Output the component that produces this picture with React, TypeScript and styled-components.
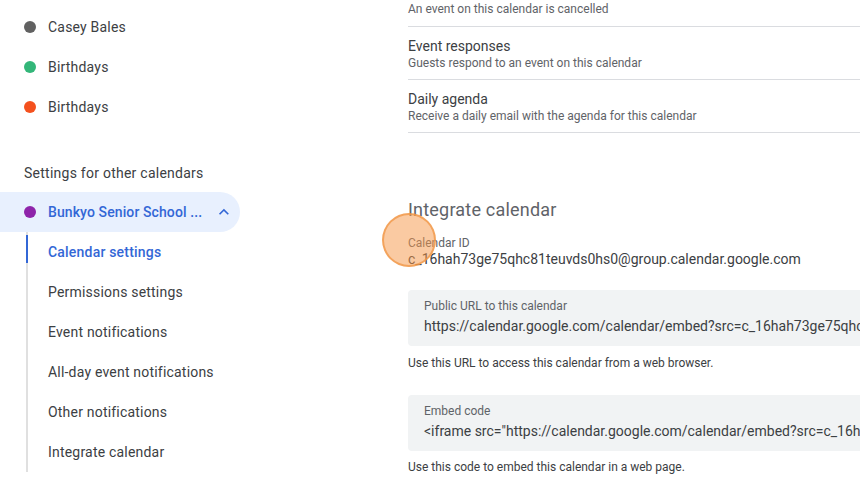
import React from "react";
import styled, { createGlobalStyle } from "styled-components";

const Global = createGlobalStyle`
  html, body { margin: 0; padding: 0; background: #fff; }
  body { width: 860px; height: 482px; overflow: hidden; font-family: Roboto, "Liberation Sans", Arial, sans-serif; }
`;

const Page = styled.div`
  display: flex;
  width: 860px;
  height: 482px;
  overflow: hidden;
  position: relative;
`;

const Sidebar = styled.nav`
  width: 256px;
  flex: none;
  padding-top: 7px;
  display: flex;
  flex-direction: column;
`;

const CalRow = styled.div`
  display: flex;
  align-items: center;
  height: 40px;
  padding-left: 24px;
  gap: 12px;
  font-size: 14px;
  letter-spacing: 0.2px;
  color: #3c4043;
`;

const Dot = styled.span<{ $c: string }>`
  width: 12px;
  height: 12px;
  border-radius: 50%;
  background: ${(p) => p.$c};
  flex: none;
`;

const SectionTitle = styled.div`
  margin: 36px 0 9px 24px;
  line-height: 20px;
  font-size: 14px;
  letter-spacing: 0.25px;
  color: #3c4043;
`;

const SelectedCal = styled.div`
  display: flex;
  align-items: center;
  height: 40px;
  width: 240px;
  box-sizing: border-box;
  padding-left: 24px;
  padding-right: 6px;
  gap: 12px;
  background: #e8f0fe;
  border-radius: 0 20px 20px 0;
  color: #3367d6;
  font-size: 14px;
  letter-spacing: 0.1px;
  font-weight: 500;
`;

const SelName = styled.span`
  flex: 1;
  white-space: nowrap;
`;

const SubList = styled.div`
  margin-left: 26px;
  border-left: 2px solid #e0e0e0;
  display: flex;
  flex-direction: column;
`;

const SubItem = styled.div<{ $active?: boolean }>`
  position: relative;
  height: 40px;
  display: flex;
  align-items: center;
  padding-left: 20px;
  font-size: 14px;
  letter-spacing: 0.2px;
  color: ${(p) => (p.$active ? "#3367d6" : "#3c4043")};
  font-weight: ${(p) => (p.$active ? 500 : 400)};
  &::before {
    content: "";
    display: ${(p) => (p.$active ? "block" : "none")};
    position: absolute;
    left: -2px;
    top: 3px;
    width: 2px;
    height: 28px;
    background: #3367d6;
  }
`;

const Main = styled.main`
  flex: 1;
  padding-left: 152px;
  padding-top: 1px;
  display: flex;
  flex-direction: column;
  min-width: 0;
`;

const NotifRow = styled.div<{ $first?: boolean }>`
  border-bottom: 1px solid #dadce0;
  padding: ${(p) => (p.$first ? "0 0 9px" : "10px 0 8px")};
  display: flex;
  flex-direction: column;
`;

const NotifTitle = styled.div`
  font-size: 14px;
  line-height: 18px;
  color: #3c4043;
`;

const NotifSub = styled.div`
  font-size: 12px;
  line-height: 16px;
  color: #5f6368;
`;

const Heading = styled.h2`
  margin: 65px 0 13px;
  font-size: 18px;
  line-height: 24px;
  font-weight: 400;
  color: #5f6368;
  letter-spacing: 0.2px;
`;

const FieldLabel = styled.div`
  font-size: 12px;
  line-height: 16px;
  color: #5f6368;
`;

const FieldValue = styled.div`
  font-size: 14px;
  line-height: 16px;
  color: #3c4043;
  white-space: nowrap;
`;

const CodeBox = styled.div<{ $top: number }>`
  margin-top: ${(p) => p.$top}px;
  width: 620px;
  height: 56px;
  box-sizing: border-box;
  padding: 8px 16px 0;
  background: #f1f3f4;
  border-radius: 4px;
  display: flex;
  flex-direction: column;
  overflow: hidden;
`;

const BoxValue = styled.div`
  font-size: 14px;
  line-height: 20px;
  color: #3c4043;
  white-space: nowrap;
  margin-top: 2px;
`;

const Help = styled.div`
  margin-top: 9px;
  font-size: 12px;
  line-height: 16px;
  color: #3c4043;
`;

const Help2 = styled(Help)`
  margin-top: 8px;
`;

const ClickMarker = styled.div`
  position: absolute;
  left: 382px;
  top: 213px;
  width: 54px;
  height: 54px;
  box-sizing: border-box;
  border-radius: 50%;
  background: rgba(245, 150, 70, 0.5);
  border: 2px solid rgba(240, 150, 70, 0.75);
  pointer-events: none;
`;

const Chevron = () => (
  <svg width="24" height="24" viewBox="0 0 24 24" fill="#3367d6">
    <path d="M12 8l-6 6 1.41 1.41L12 10.83l4.59 4.58L18 14z" />
  </svg>
);

export default function App() {
  const subs = [
    "Calendar settings",
    "Permissions settings",
    "Event notifications",
    "All-day event notifications",
    "Other notifications",
    "Integrate calendar",
  ];
  return (
    <Page>
      <Global />
      <Sidebar>
        <CalRow><Dot $c="#616161" />Casey Bales</CalRow>
        <CalRow><Dot $c="#33b679" />Birthdays</CalRow>
        <CalRow><Dot $c="#f4511e" />Birthdays</CalRow>
        <SectionTitle>Settings for other calendars</SectionTitle>
        <SelectedCal>
          <Dot $c="#8e24aa" />
          <SelName>Bunkyo Senior School ...</SelName>
          <Chevron />
        </SelectedCal>
        <SubList>
          {subs.map((s, i) => (
            <SubItem key={s} $active={i === 0}>{s}</SubItem>
          ))}
        </SubList>
      </Sidebar>
      <Main>
        <NotifRow $first>
          <NotifSub>An event on this calendar is cancelled</NotifSub>
        </NotifRow>
        <NotifRow>
          <NotifTitle>Event responses</NotifTitle>
          <NotifSub>Guests respond to an event on this calendar</NotifSub>
        </NotifRow>
        <NotifRow>
          <NotifTitle>Daily agenda</NotifTitle>
          <NotifSub>Receive a daily email with the agenda for this calendar</NotifSub>
        </NotifRow>
        <Heading>Integrate calendar</Heading>
        <FieldLabel>Calendar ID</FieldLabel>
        <FieldValue>c_16hah73ge75qhc81teuvds0hs0@group.calendar.google.com</FieldValue>
        <CodeBox $top={23}>
          <FieldLabel>Public URL to this calendar</FieldLabel>
          <BoxValue>https://calendar.google.com/calendar/embed?src=c_16hah73ge75qhc81teuvds0hs0%40group.calendar.google.com</BoxValue>
        </CodeBox>
        <Help>Use this URL to access this calendar from a web browser.</Help>
        <CodeBox $top={24}>
          <FieldLabel>Embed code</FieldLabel>
          <BoxValue>&lt;iframe src="https://calendar.google.com/calendar/embed?src=c_16hah73ge75qhc81teuvds0hs0%40group.calendar.google.com"</BoxValue>
        </CodeBox>
        <Help2>Use this code to embed this calendar in a web page.</Help2>
      </Main>
      <ClickMarker />
    </Page>
  );
}
